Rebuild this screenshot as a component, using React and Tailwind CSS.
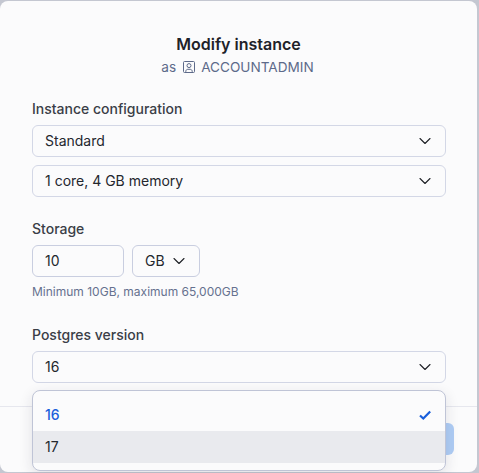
import { ChevronDown } from 'lucide-react';

const font = { fontFamily: 'Inter, sans-serif' };

function RoleIcon() {
  return (
    <svg width="14" height="14" viewBox="0 0 14 14" fill="none" stroke="currentColor" strokeWidth="1" className="mr-[5px] ml-[6px]">
      <rect x="1.5" y="1.5" width="11" height="11" rx="1" />
      <circle cx="7" cy="5.6" r="2" />
      <path d="M3.8 12.5v-1.2c0-1.2 1-2 2-2h2.4c1 0 2 .8 2 2v1.2" />
    </svg>
  );
}

function SelectBox({ children }) {
  return (
    <div className="flex h-8 w-full items-center justify-between rounded-md border border-[#d3d7e6] pr-[10px] pl-3 text-sm text-[#24272e]">
      <span>{children}</span>
      <ChevronDown size={20} strokeWidth={1.3} className="text-[#1e2026]" />
    </div>
  );
}

export default function App() {
  return (
    <div className="h-[473px] w-[479px] overflow-hidden bg-[#c4c7d1] pt-px pr-[2px]" style={font}>
      <div className="relative h-[471px] rounded-lg bg-[#fbfbfc]">
        <div className="flex flex-col items-center pt-[33px]">
          <h1 className="text-base leading-5 font-semibold text-[#1e2229]">Modify instance</h1>
          <p className="mt-[3px] -ml-[2px] flex items-center text-[13.6px] leading-5 text-[#5d6a8a]">
            as
            <RoleIcon />
            ACCOUNTADMIN
          </p>
        </div>

        <div className="mt-[22px] pr-[31px] pl-8">
          <label className="block text-sm leading-5 font-medium text-[#3a3e47]">Instance configuration</label>
          <div className="mt-[6px] flex flex-col gap-2">
            <SelectBox>Standard</SelectBox>
            <SelectBox>1 core, 4 GB memory</SelectBox>
          </div>

          <label className="mt-[22px] block text-sm leading-5 font-medium text-[#3a3e47]">Storage</label>
          <div className="mt-[6px] flex gap-2">
            <div className="flex h-8 w-[92px] items-center rounded-md border border-[#c9cee0] pl-3 text-sm text-[#24272e]">10</div>
            <div className="flex h-8 w-[68px] items-center gap-[4px] rounded-md border border-[#c9cee0] pl-3 text-sm text-[#24272e]">
              GB
              <ChevronDown size={20} strokeWidth={1.3} className="text-[#1e2026]" />
            </div>
          </div>
          <p className="mt-[7px] text-xs leading-4 text-[#66718f]">Minimum 10GB, maximum 65,000GB</p>

          <label className="mt-[25px] block text-sm leading-5 font-medium text-[#3a3e47]">Postgres version</label>
          <div className="mt-[6px]">
            <SelectBox>16</SelectBox>
          </div>
        </div>

        <div className="mt-[23px] flex justify-end border-t border-[#e6e7ee] pt-4 pr-[23px]">
          <div className="h-8 w-20 rounded-md bg-[#afcdf5]" />
        </div>

        <div className="absolute top-[389px] left-8 h-[81px] w-[414px] overflow-hidden rounded-lg border border-[#bfc4d6] bg-[#fbfbfc] py-2 shadow-[0_4px_14px_rgba(30,35,60,0.12)]">
          <div className="flex h-8 items-center justify-between pr-[13px] pl-3 text-sm font-medium text-[#1a5fdb]">
            16
            <svg width="14" height="14" viewBox="0 0 14 14" fill="none" stroke="currentColor" strokeWidth="2.2">
              <path d="M2 7.5l3.3 3L12.2 3.5" />
            </svg>
          </div>
          <div className="flex h-8 items-center bg-[#e9eaee] pl-3 text-sm text-[#24272e]">17</div>
        </div>
      </div>
    </div>
  );
}
